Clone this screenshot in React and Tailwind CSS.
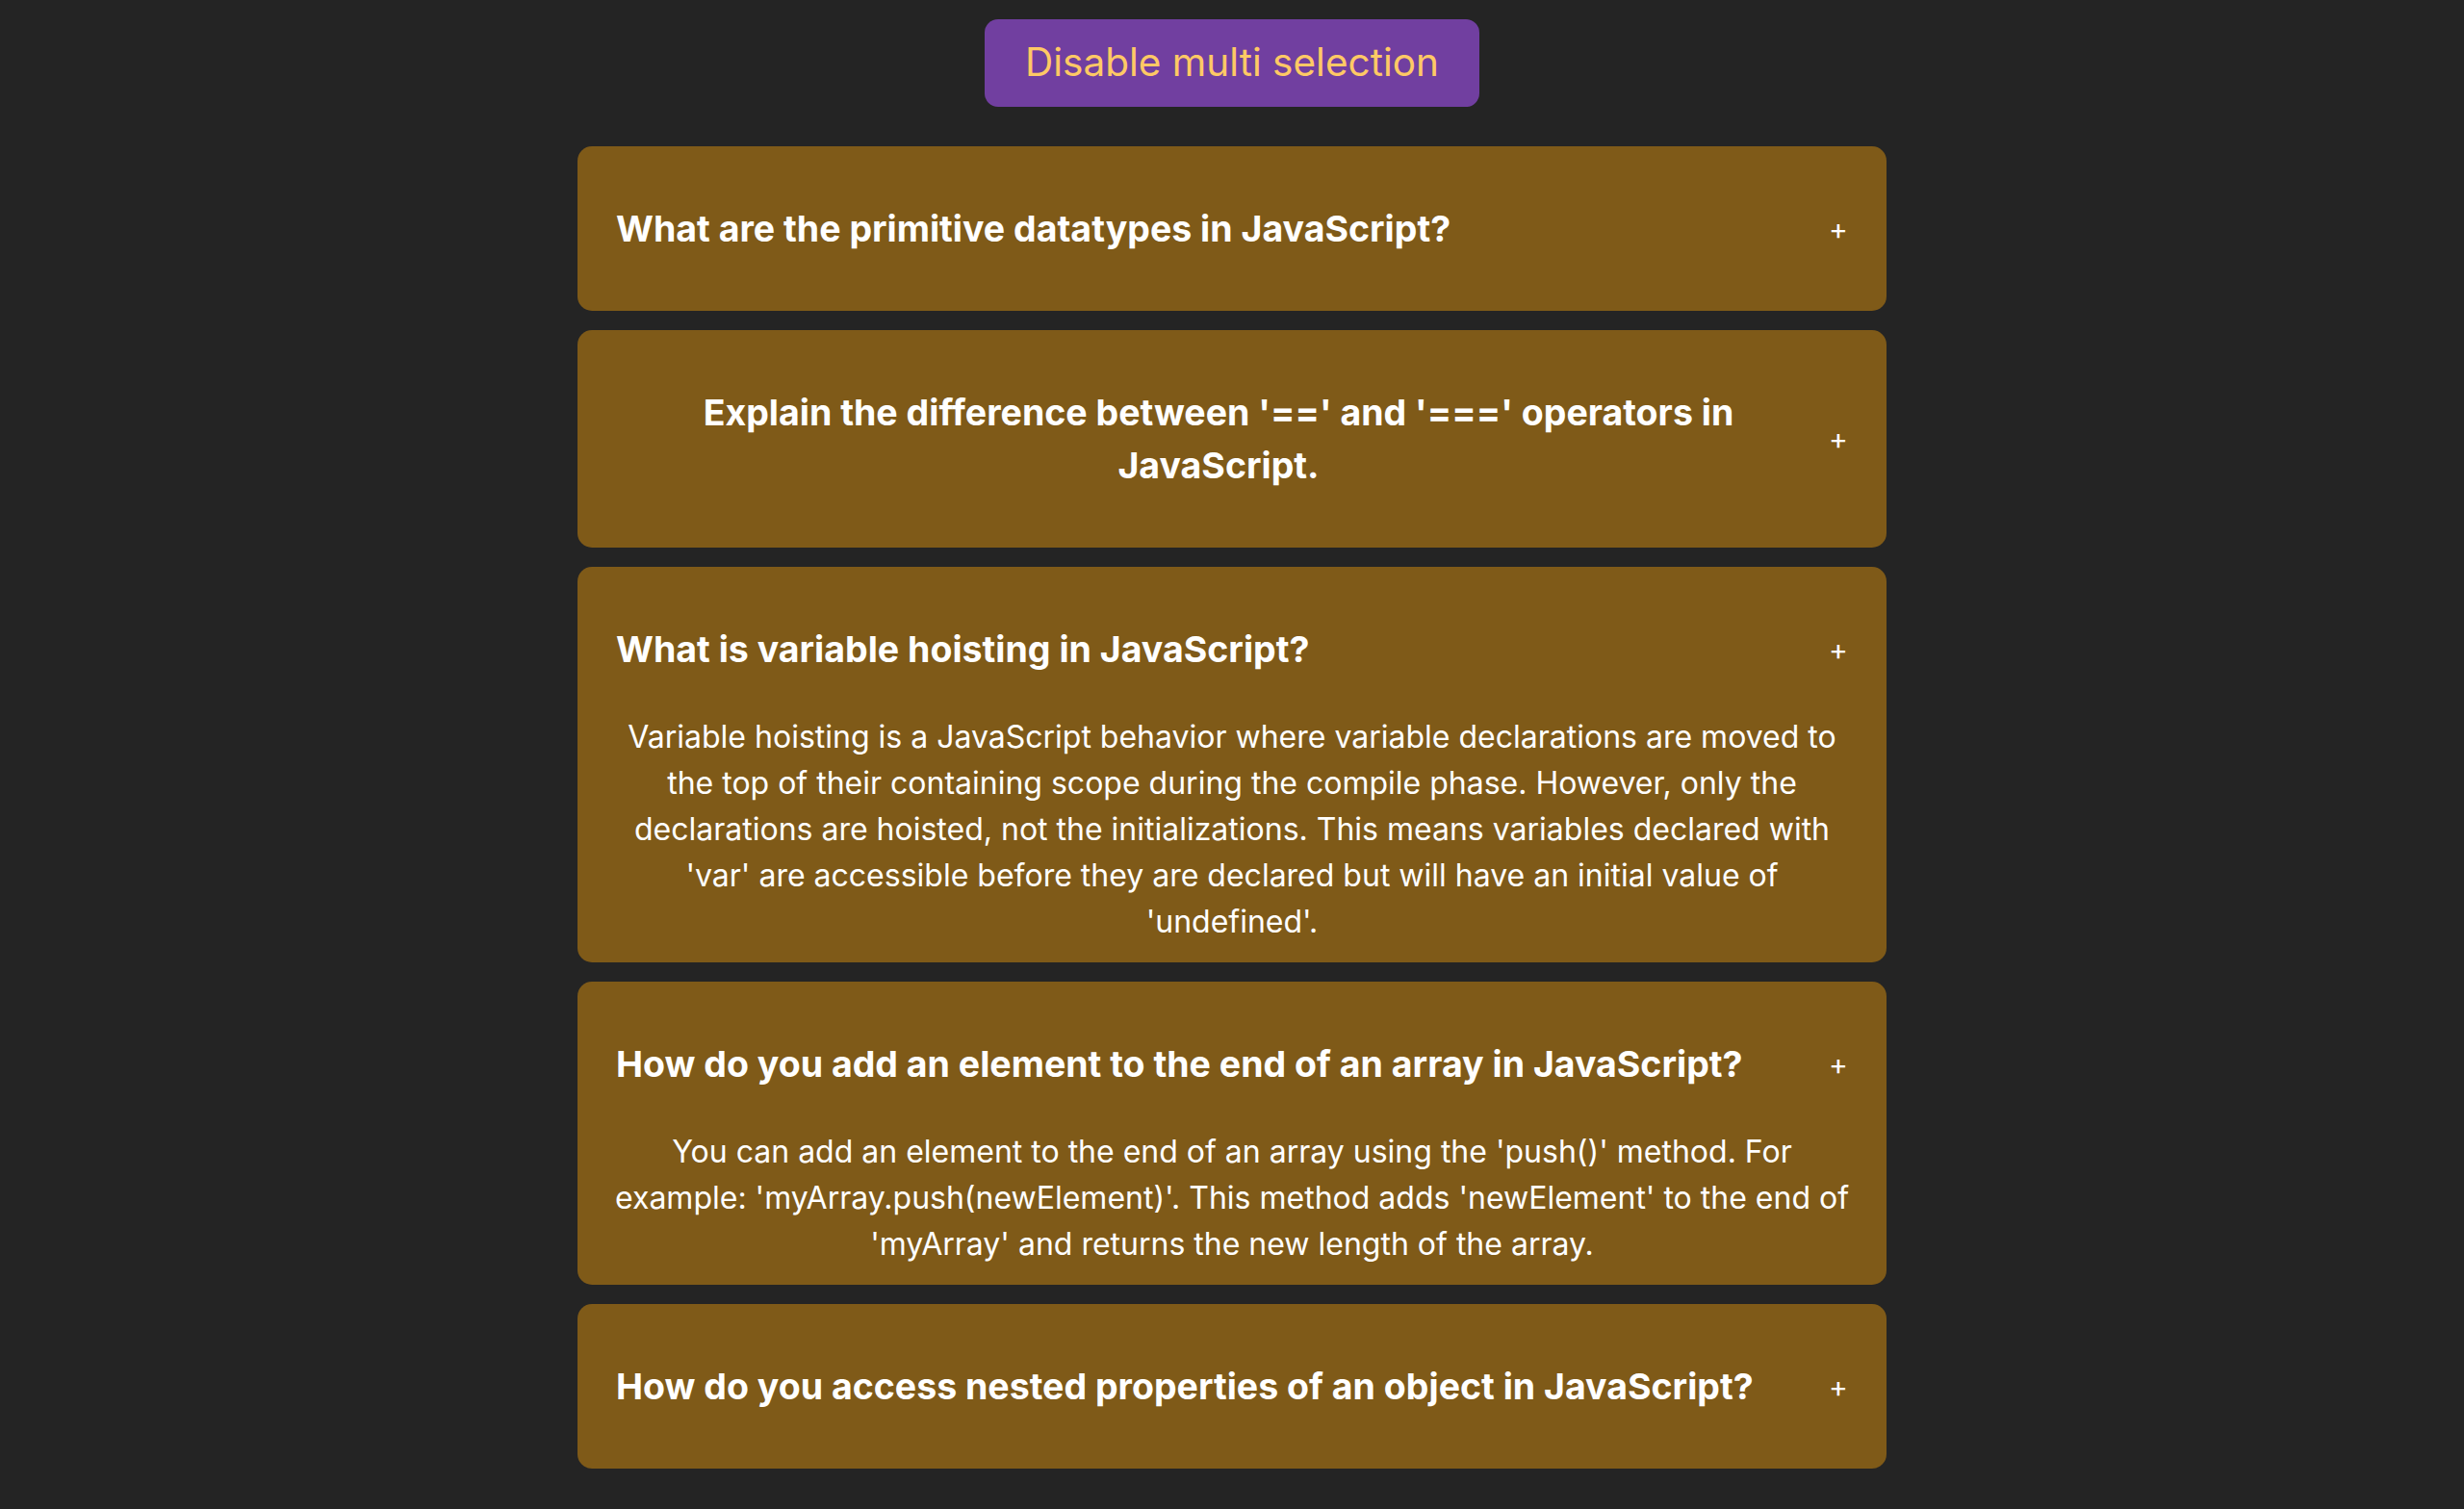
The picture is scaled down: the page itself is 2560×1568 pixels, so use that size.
import { useState } from 'react'

const faqs = [
  {
    id: 1,
    q: 'What are the primitive datatypes in JavaScript?',
    a: 'The primitive datatypes in JavaScript are string, number, boolean, null, undefined, symbol and bigint.',
  },
  {
    id: 2,
    q: "Explain the difference between '==' and '===' operators in JavaScript.",
    a: "'==' compares values after type coercion, while '===' compares both value and type without coercion.",
  },
  {
    id: 3,
    q: 'What is variable hoisting in JavaScript?',
    a: "Variable hoisting is a JavaScript behavior where variable declarations are moved to the top of their containing scope during the compile phase. However, only the declarations are hoisted, not the initializations. This means variables declared with 'var' are accessible before they are declared but will have an initial value of 'undefined'.",
  },
  {
    id: 4,
    q: 'How do you add an element to the end of an array in JavaScript?',
    a: "You can add an element to the end of an array using the 'push()' method. For example: 'myArray.push(newElement)'. This method adds 'newElement' to the end of 'myArray' and returns the new length of the array.",
  },
  {
    id: 5,
    q: 'How do you access nested properties of an object in JavaScript?',
    a: "You can use dot notation or bracket notation, for example 'obj.a.b' or 'obj['a']['b']'.",
  },
]

function Item({ item, open, onToggle }) {
  return (
    <div className="w-full bg-[#7f5a18] rounded-[15px] px-10 py-[18px] text-white">
      <div
        className="flex items-center justify-between gap-2 py-10 cursor-pointer"
        onClick={() => onToggle(item.id)}
      >
        <h3 className="text-[37.5px] leading-[55px] font-bold text-center">{item.q}</h3>
        <span className="text-[30px] leading-none shrink-0 w-[20px] text-center">+</span>
      </div>
      {open && (
        <div className="-mx-2 text-[32px] leading-[48px] text-center">{item.a}</div>
      )}
    </div>
  )
}

export default function App() {
  const [multi, setMulti] = useState(true)
  const [opened, setOpened] = useState([3, 4])

  function toggle(id) {
    if (multi) {
      setOpened((prev) => (prev.includes(id) ? prev.filter((x) => x !== id) : [...prev, id]))
    } else {
      setOpened((prev) => (prev.includes(id) ? [] : [id]))
    }
  }

  return (
    <main
      className="min-h-screen bg-[#242424] flex flex-col items-center pt-5 pb-10"
      style={{ fontFamily: 'Inter, "Noto Sans", sans-serif' }}
    >
      <button
        onClick={() => setMulti(!multi)}
        className="h-[91px] px-[42px] rounded-[14px] bg-[#713fa0] text-[#ffc965] text-[40.5px]"
      >
        {multi ? 'Disable' : 'Enable'} multi selection
      </button>
      <div className="w-[1360px] mt-[41px] flex flex-col gap-[20px]">
        {faqs.map((f) => (
          <Item key={f.id} item={f} open={opened.includes(f.id)} onToggle={toggle} />
        ))}
      </div>
    </main>
  )
}
